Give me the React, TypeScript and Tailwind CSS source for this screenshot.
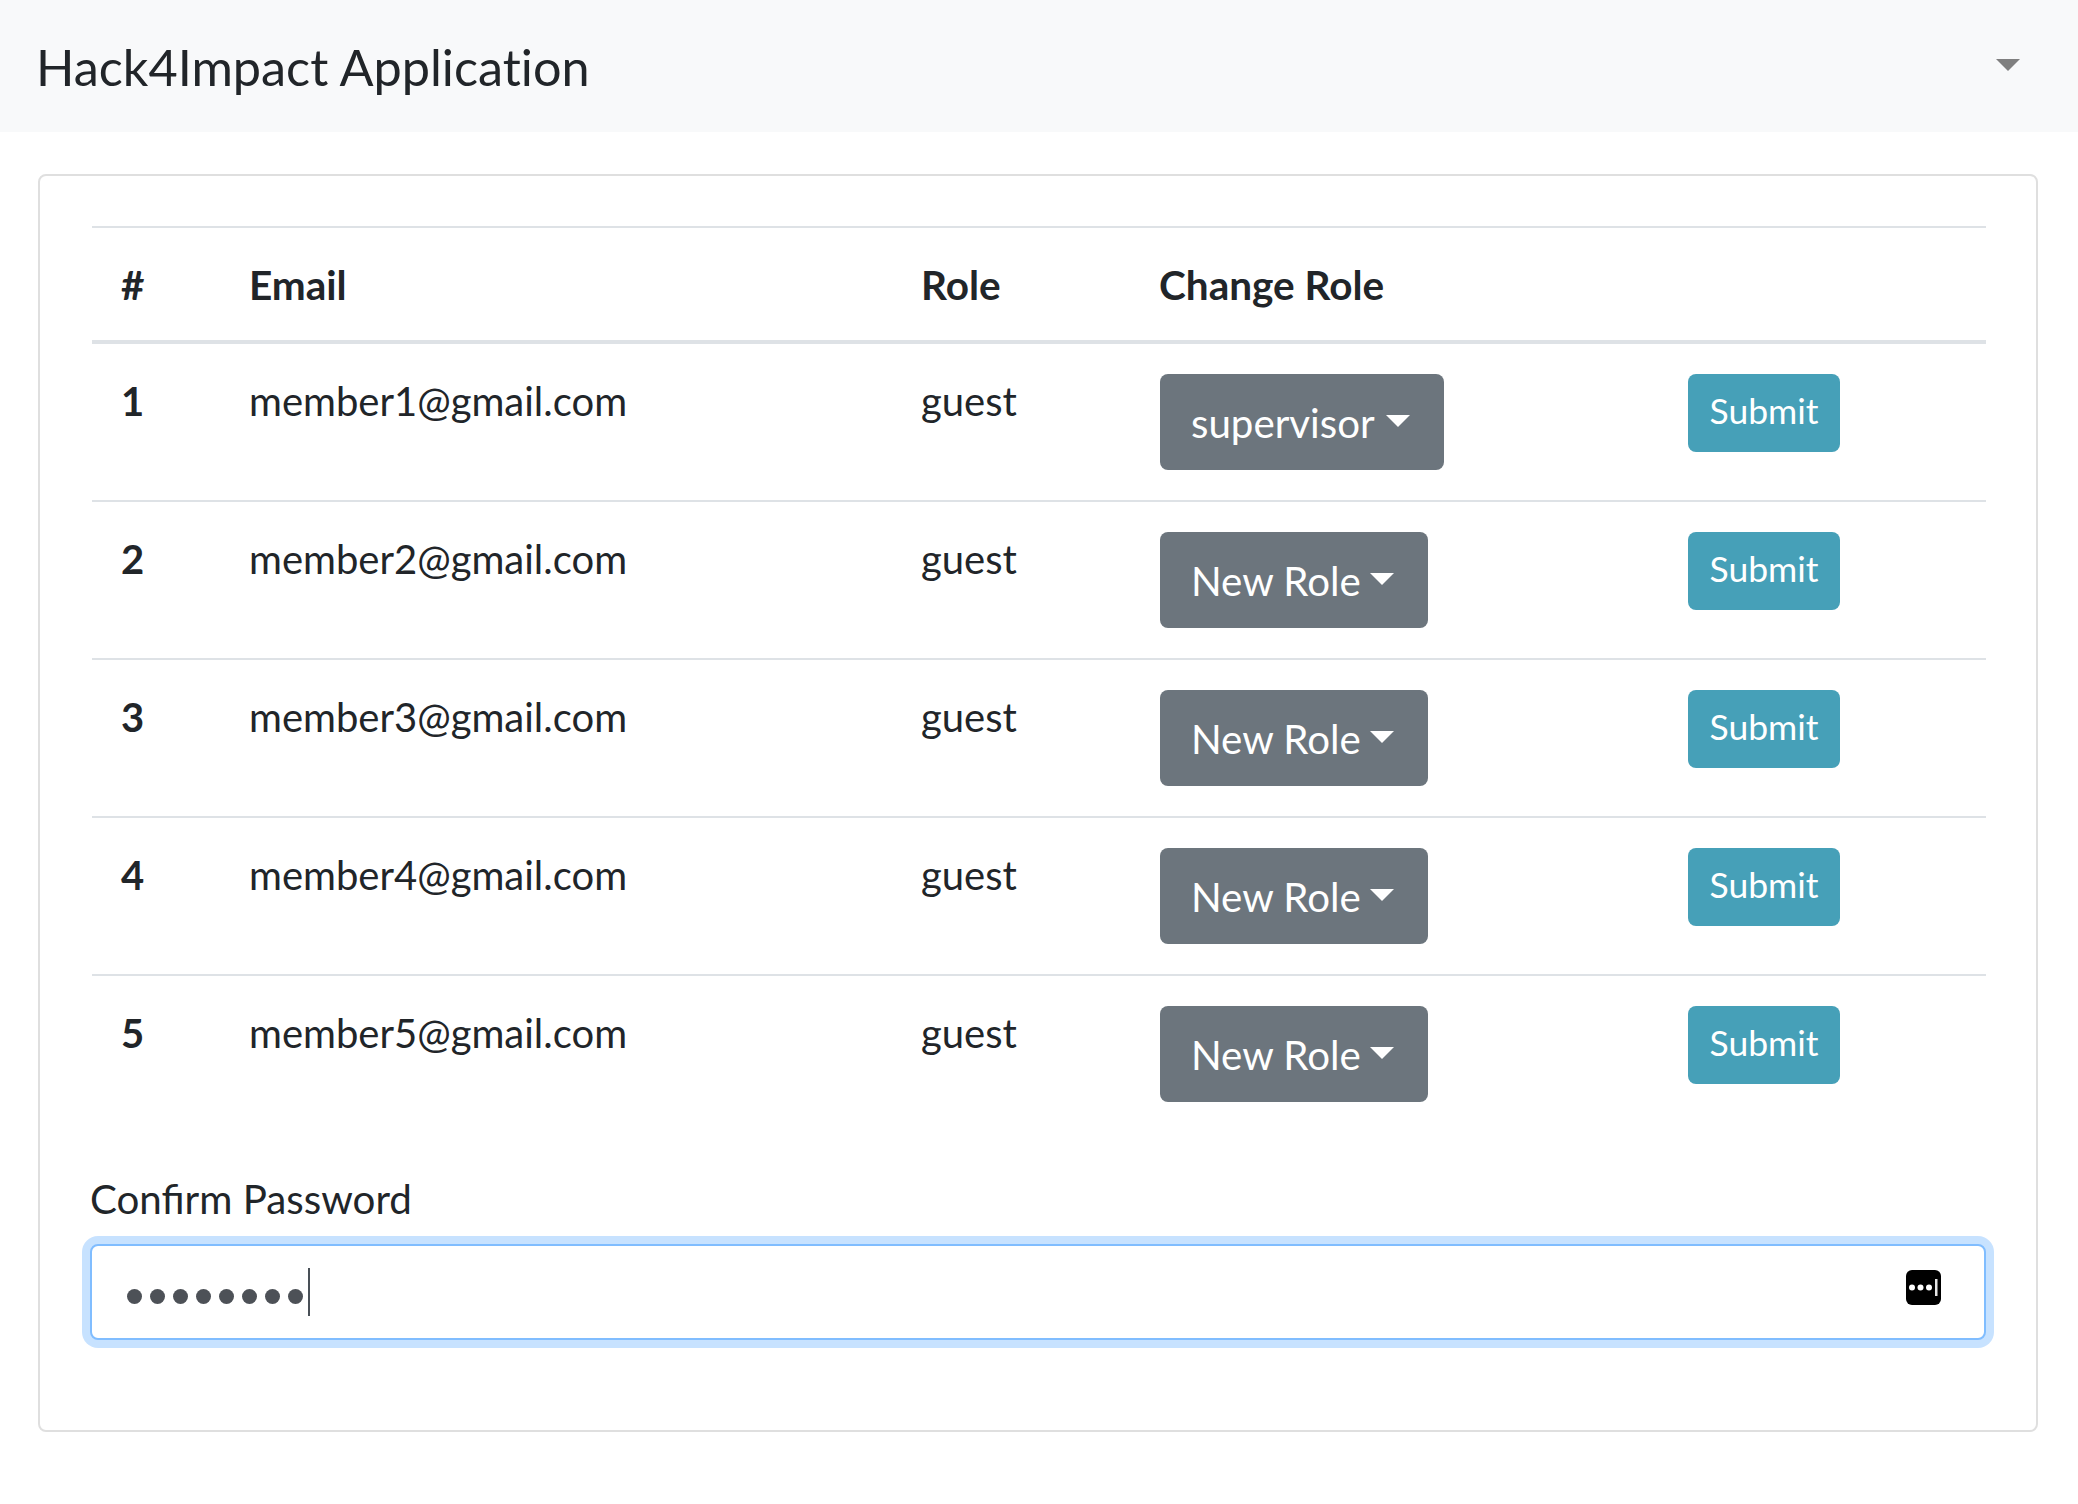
const members = [
    { id: 1, email: "member1@gmail.com", role: "guest", pick: "supervisor" },
    { id: 2, email: "member2@gmail.com", role: "guest", pick: "New Role" },
    { id: 3, email: "member3@gmail.com", role: "guest", pick: "New Role" },
    { id: 4, email: "member4@gmail.com", role: "guest", pick: "New Role" },
    { id: 5, email: "member5@gmail.com", role: "guest", pick: "New Role" },
];

const dots = [0, 1, 2, 3, 4, 5, 6, 7];

const Caret = ({ className }: { className: string }) => (
    <span className={`inline-block w-0 h-0 border-x-[12px] border-x-transparent border-t-[12px] ${className}`}></span>
);

const App = () => {
    return (
        <div className="min-h-[1504px] bg-white text-[#212529] font-['Lato','Noto_Sans',sans-serif] text-[40px] leading-[60px]">
            <nav className="h-[132px] bg-[#f8f9fa] flex items-center justify-between pl-[36px] pr-[58px]">
                <span className="text-[50.4px] leading-[75px] [font-variant-ligatures:none]">Hack4Impact Application</span>
                <Caret className="border-t-[#7f7f7f] mb-[2px]" />
            </nav>
            <div className="mt-[42px] mx-[38px] w-[2000px] h-[1258px] border-2 border-[#dfdfdf] rounded-lg pt-[50px] px-[52px]">
                <table className="w-[1894px] table-fixed border-separate border-spacing-0 border-t-2 border-[#dee2e6] text-left">
                    <colgroup>
                        <col className="w-[127px]" />
                        <col className="w-[672px]" />
                        <col className="w-[238px]" />
                        <col className="w-[529px]" />
                        <col className="w-[328px]" />
                    </colgroup>
                    <thead className="text-[40.5px]">
                        <tr>
                            <th className="pt-[27px] pb-[25px] pl-[29px] border-b-4 border-[#dee2e6] font-bold">#</th>
                            <th className="pt-[27px] pb-[25px] pl-[30px] border-b-4 border-[#dee2e6] font-bold">Email</th>
                            <th className="pt-[27px] pb-[25px] pl-[30px] border-b-4 border-[#dee2e6] font-bold">Role</th>
                            <th className="pt-[27px] pb-[25px] pl-[30px] border-b-4 border-[#dee2e6] font-bold">Change Role</th>
                            <th className="pt-[27px] pb-[25px] pl-[30px] border-b-4 border-[#dee2e6] font-bold"></th>
                        </tr>
                    </thead>
                    <tbody>
                        {members.map((m, i) => {
                            const line = i < members.length - 1 ? "border-b-2 border-[#dee2e6]" : "pb-[2px]";
                            return (
                                <tr key={m.id}>
                                    <th className={`align-top pt-[27px] pl-[29px] font-bold ${line}`}>{m.id}</th>
                                    <td className={`align-top pt-[27px] pl-[30px] ${line}`}>{m.email}</td>
                                    <td className={`align-top pt-[27px] pl-[30px] ${line}`}>{m.role}</td>
                                    <td className={`align-top pt-[30px] pb-[30px] pl-[31px] ${line}`}>
                                        <button className={`h-[96px] inline-flex items-center pl-[31px] rounded-lg bg-[#6c757d] text-white text-[40.25px] leading-[60px] ${m.pick === "supervisor" ? "w-[284px] gap-[11px]" : "w-[268px] gap-[9px]"}`}>
                                            <span className="pt-[2px]">{m.pick}</span>
                                            <Caret className="border-t-white mb-[2px]" />
                                        </button>
                                    </td>
                                    <td className={`align-top pt-[30px] pl-[30px] ${line}`}>
                                        <button className="h-[78px] w-[152px] flex items-center justify-center rounded-lg bg-[#46a0b8] text-white text-[35.5px] leading-[54px] pb-[5px]">
                                            Submit
                                        </button>
                                    </td>
                                </tr>
                            );
                        })}
                    </tbody>
                </table>
                <div className="mt-[37px] -ml-[2px] mb-[15px] text-[40.3px]">Confirm Password</div>
                <div className="w-[1896px] -ml-[2px] h-[96px] flex items-center justify-between pl-[35px] pr-[43px] bg-white border-2 border-[#80bdff] rounded-lg shadow-[0_0_0_8px_rgba(0,123,255,0.22)]">
                    <div className="flex items-center">
                        <div className="flex items-center gap-[8px] pt-[8px]">
                            {dots.map((d) => (
                                <span key={d} className="w-[15px] h-[15px] rounded-full bg-[#4d5157]"></span>
                            ))}
                        </div>
                        <span className="ml-[5px] w-[2px] h-[48px] bg-[#495057]"></span>
                    </div>
                    <svg className="mb-[9px]" width="35" height="35" viewBox="0 0 35 35">
                        <rect width="35" height="35" rx="6" fill="#000" />
                        <circle cx="6" cy="17.5" r="3" fill="#fff" />
                        <circle cx="14.5" cy="17.5" r="3" fill="#fff" />
                        <circle cx="23" cy="17.5" r="3" fill="#fff" />
                        <rect x="29" y="9" width="2.5" height="17" fill="#e6e6e6" />
                    </svg>
                </div>
            </div>
        </div>
    );
};

export default App;
